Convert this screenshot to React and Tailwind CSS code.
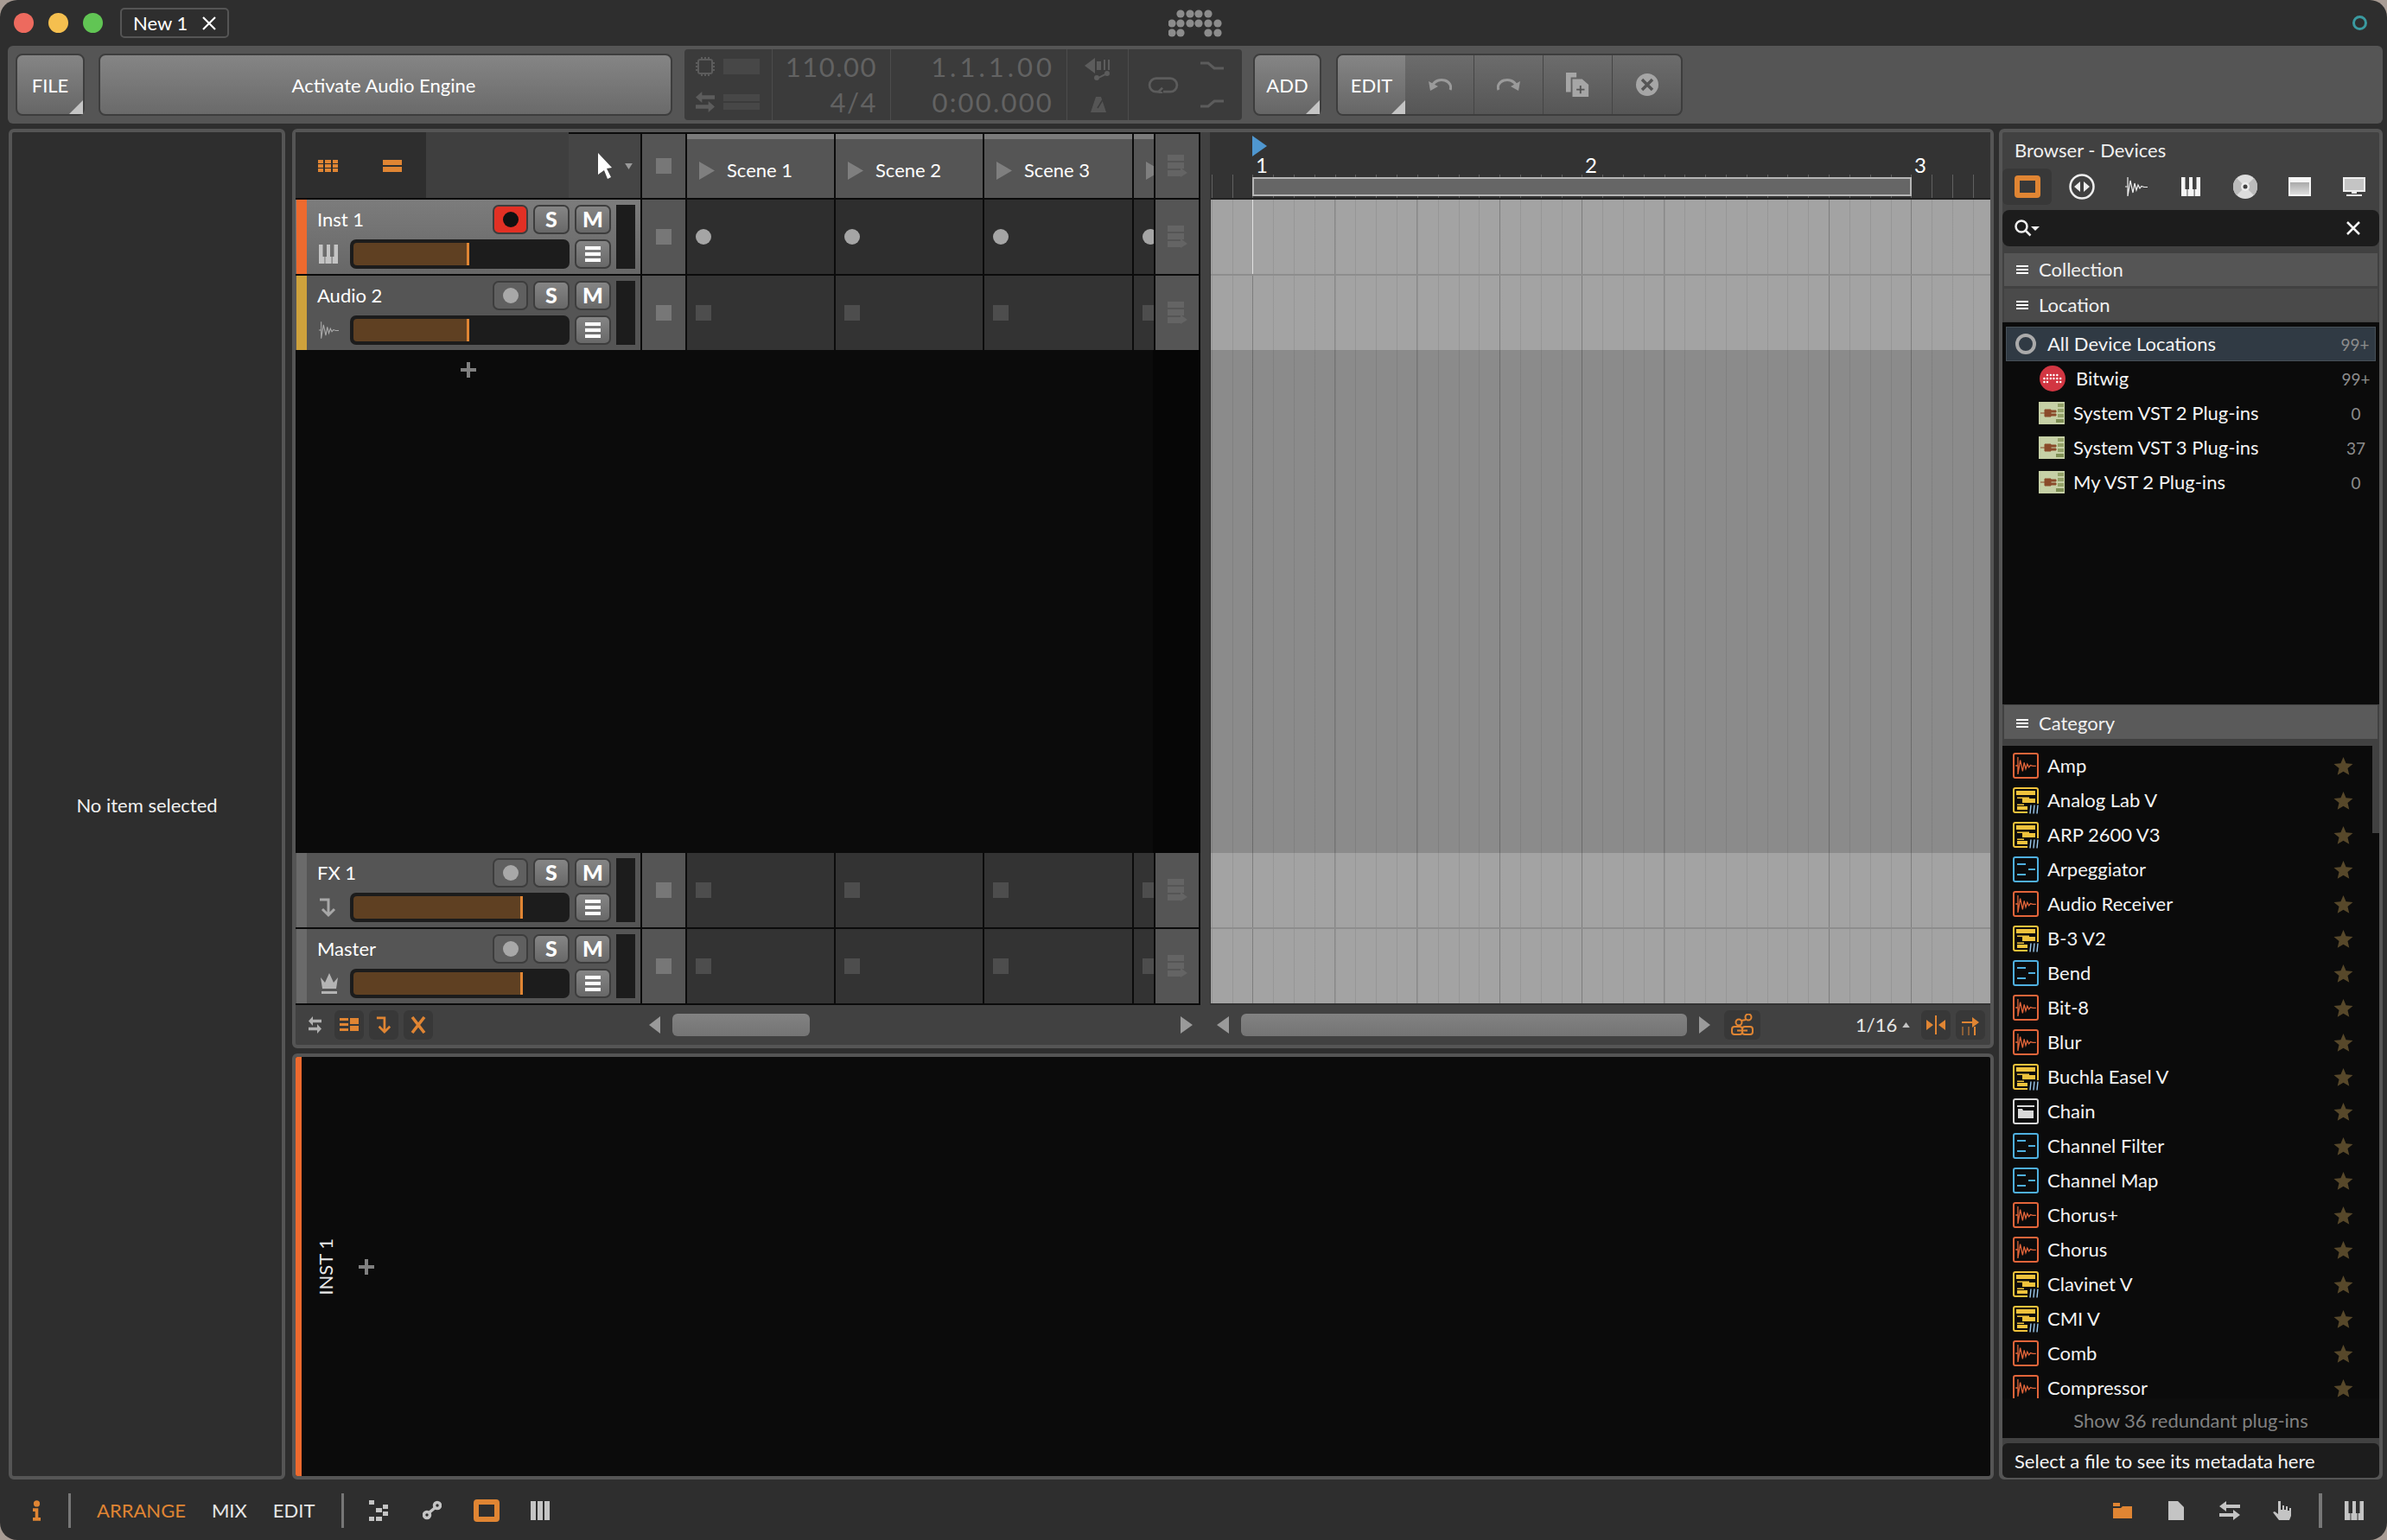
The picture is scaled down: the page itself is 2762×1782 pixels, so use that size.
import React from 'react';

const FONT = "font-['Lato','Liberation_Sans',sans-serif]";
const GRID = 'bg-[repeating-linear-gradient(90deg,transparent_0_48px,rgba(0,0,0,0.17)_48px_49px,transparent_49px_95.25px),repeating-linear-gradient(90deg,transparent_0_0.8px,rgba(0,0,0,0.08)_0.8px_1.8px,transparent_1.8px_23.81px)]';

const Piano = ({ className, color = '#c4c4c4' }) => (
  <svg viewBox="0 0 22 22" className={className} fill={color}>
    <path d="M0 0h4.5v14h2v8H0zM9 0h4v14h1.6v8H7.4v-8H9zM17.5 0H22v22h-6.4v-8h1.9z" />
  </svg>
);

const Wave = ({ className, color = '#c4c4c4', sw = 1.2 }) => (
  <svg viewBox="0 0 26 22" className={className} fill="none" stroke={color} strokeWidth={sw}>
    <path d="M0 11h3M3 0v22L6 4l3 14 2-11 2 8 2-6 2 4 2-2.500 3 1H26" />
  </svg>
);

const Stack = ({ className = 'w-[23px] h-[26px]' }) => (
  <svg viewBox="0 0 23 26" className={className} fill="#646464">
    <rect width="19" height="7" />
    <rect y="9" width="19" height="7" />
    <rect y="18" width="15" height="7" />
    <path d="M15 15l8 6-8 5z" />
  </svg>
);

const Bars = ({ className = 'w-[14px] h-[10px]', color = '#fff' }) => (
  <svg viewBox="0 0 14 10" className={className} fill={color}>
    <rect width="14" height="2" />
    <rect y="4" width="14" height="2" />
    <rect y="8" width="14" height="2" />
  </svg>
);

const SendArrow = ({ className, color = '#a8a8a8' }) => (
  <svg viewBox="0 0 20 24" className={className} fill="none" stroke={color} strokeWidth="3">
    <path d="M1 3h10v17M4 14l7 7 7-7" />
  </svg>
);

const Crown = ({ className }) => (
  <svg viewBox="0 0 24 28" className={className} fill="#b4b4b4">
    <path d="M2 7l5 6 5-11 5 11 5-6-2 13H4z" />
    <rect x="3" y="23" width="18" height="3" />
  </svg>
);

const SwapArrows = ({ className, color = '#b0b0b0' }) => (
  <svg viewBox="0 0 24 22" className={className} fill={color} preserveAspectRatio="none">
    <path d="M8 0v4h16v4H8v4L0 6zM16 10v4H0v4h16v4l8-6z" />
  </svg>
);

const Tri = ({ dir = 'r', className, color = '#9a9a9a' }) => (
  <svg viewBox="0 0 14 22" className={className} fill={color} preserveAspectRatio="none">
    <path d={dir === 'r' ? 'M0 0l14 11L0 22z' : 'M14 0L0 11l14 11z'} />
  </svg>
);

const Star = () => (
  <svg viewBox="0 0 24 24" className="w-[23px] h-[23px]" fill="#57482a">
    <path d="M12 1l3.2 7.6 8.3.7-6.3 5.4 1.9 8.1L12 18.500l-7.100 4.300 1.900-8.100L.500 9.300l8.300-.7z" />
  </svg>
);

const Btn = ({ children, red, dim, className = 'w-[42px]' }) => (
  <div className={`h-[34px] rounded-[7px] border-[2px] border-[#3d3d3d] flex items-center justify-center text-white text-[25px] font-black ${className} ${red ? 'bg-[#e23024]' : dim ? 'bg-[#606060]' : 'bg-[linear-gradient(#858585,#686868)]'}`}>
    {children}
  </div>
);

const Track = ({ name, strip, selected, level, icon, armed }) => (
  <div className={`w-[399px] h-[86px] flex pl-[1px] ${selected ? 'bg-[linear-gradient(#7c7c7c,#676767)]' : 'bg-[#555555]'}`}>
    <div className={`w-[12px] shrink-0 ${strip}`} />
    <div className="flex flex-col pt-[6px] gap-[6px]">
      <div className="flex items-center h-[34px]">
        <span className="w-[215px] pl-[12px] text-[22px] text-white leading-none">{name}</span>
        <Btn red={armed} dim={!armed} className="w-[41px]">
          <span className={`w-[18px] h-[18px] rounded-full ${armed ? 'bg-[#111111]' : 'bg-[#a8a8a8]'}`} />
        </Btn>
        <Btn className="w-[42px] ml-[6px]">S</Btn>
        <Btn className="w-[42px] ml-[6px]">M</Btn>
      </div>
      <div className="flex items-center h-[34px]">
        <div className="w-[50px] pl-[14px] flex items-center">{icon}</div>
        <div className="w-[254px] h-[34px] bg-[#1c1c1c] rounded-[7px] p-[4px] flex">
          <div className={`h-[26px] bg-[#5f4022] rounded-l-[4px] ${level}`} />
          <div className="w-[3px] h-[26px] bg-[#e08533]" />
        </div>
        <Btn className="w-[42px] ml-[6px]">
          <svg viewBox="0 0 18 18" className="w-[18px] h-[18px]" fill="#fff">
            <rect width="18" height="4" />
            <rect y="7" width="18" height="4" />
            <rect y="14" width="18" height="4" />
          </svg>
        </Btn>
      </div>
    </div>
    <div className="w-[22px] h-[74px] mt-[6px] ml-[6px] bg-[#1c1c1c]" />
  </div>
);

const ClipCell = ({ w, dot, bg }) => (
  <div className={`h-full ${w} pl-[10px] flex items-center overflow-hidden ${bg}`}>
    <span className={`w-[18px] h-[18px] shrink-0 ${dot ? 'rounded-full bg-[#a5a5a5]' : 'bg-[#4d4d4d]'}`} />
  </div>
);

const TrackRow = ({ dot, bg = 'bg-[#2e2e2e]', ...track }) => (
  <div className="flex h-[86px] gap-[2px] bg-[#0b0b0b]">
    <Track {...track} />
    <div className="w-[50px] bg-[#555555] flex items-center justify-center">
      <span className="w-[18px] h-[18px] bg-[#777777]" />
    </div>
    <ClipCell w="w-[170px]" dot={dot} bg={bg} />
    <ClipCell w="w-[170px]" dot={dot} bg={bg} />
    <ClipCell w="w-[171px]" dot={dot} bg={bg} />
    <ClipCell w="w-[23px]" dot={dot} bg={bg} />
    <div className="w-[50px] mr-[2px] bg-[#555555] flex items-center justify-center"><Stack /></div>
  </div>
);

const Scene = ({ label, w }) => (
  <div className={`${w} h-full bg-[#555555] flex flex-col overflow-hidden`}>
    <div className="h-[6px] bg-[#7b7b7b] shrink-0" />
    <div className="flex-1 flex items-center pl-[14px] gap-[14px] pt-[4px]">
      <Tri className="w-[18px] h-[21px] shrink-0" color="#7f7f7f" />
      {label && <span className="text-[22px] text-white leading-none whitespace-nowrap">{label}</span>}
    </div>
  </div>
);

const ToolBtn = ({ children, className = 'w-[34px]' }) => (
  <div className={`h-[34px] rounded-[6px] bg-[#383838] flex items-center justify-center ${className}`}>{children}</div>
);

const CornerBtn = ({ children, className }) => (
  <div className={`relative h-[72px] rounded-[8px] border-[2px] border-[#3d3d3d] bg-[linear-gradient(#858585,#666666)] flex items-center justify-center text-white text-[22px] ${className}`}>
    {children}
    <span className="absolute right-0 bottom-0 w-0 h-0 border-l-[16px] border-l-transparent border-b-[16px] border-b-[#c4c4c4]" />
  </div>
);

const Lane = ({ className, children }) => (
  <div className={`relative ${GRID} ${className}`}>{children}</div>
);

const DevIcon = ({ kind }) => {
  if (kind === 'a') return (
    <div className="w-[30px] h-[30px] shrink-0 rounded-[3px] border-[2px] border-[#e3653a] flex items-center justify-center">
      <Wave className="w-[24px] h-[20px]" color="#e3653a" sw={1.4} />
    </div>
  );
  if (kind === 'p') return (
    <div className="relative w-[30px] h-[30px] shrink-0 rounded-[3px] border-[2px] border-[#f0c33c]">
      <svg viewBox="0 0 26 26" className="w-full h-full" fill="#f0c33c">
        <rect x="2" y="2" width="22" height="5" />
        <rect x="3" y="9.500" width="14" height="1.500" />
        <rect x="9" y="11" width="15" height="5" />
        <rect x="3" y="17.500" width="8" height="1.500" />
        <rect x="3" y="20" width="15" height="4" />
      </svg>
      <div className="absolute right-[-4px] bottom-[-4px] w-[15px] h-[13px] bg-[#0b0b0b] rounded-[2px] flex items-center justify-center">
        <svg viewBox="0 0 13 11" className="w-[13px] h-[11px]" stroke="#9ccbf0" strokeWidth="1.400"><path d="M2 10.500L3 .5M6 10.500L7 .5M10 10.500L11 .5" /></svg>
      </div>
    </div>
  );
  if (kind === 'n') return (
    <div className="w-[30px] h-[30px] shrink-0 rounded-[3px] border-[2px] border-[#4fb0e0]">
      <svg viewBox="0 0 26 26" className="w-full h-full" fill="#4fb0e0">
        <rect x="3" y="6" width="10" height="2" />
        <rect x="16" y="12" width="8" height="2" />
        <rect x="3" y="18" width="10" height="2" />
      </svg>
    </div>
  );
  return (
    <div className="w-[30px] h-[30px] shrink-0 rounded-[3px] border-[2px] border-[#d8d8d8]">
      <svg viewBox="0 0 26 26" className="w-full h-full" fill="#d8d8d8">
        <rect x="3" y="6" width="20" height="2" />
        <path d="M4 10h5l1 2h12v9H4z" />
      </svg>
    </div>
  );
};

const categories = [
  ['Amp', 'a'], ['Analog Lab V', 'p'], ['ARP 2600 V3', 'p'], ['Arpeggiator', 'n'], ['Audio Receiver', 'a'],
  ['B-3 V2', 'p'], ['Bend', 'n'], ['Bit-8', 'a'], ['Blur', 'a'], ['Buchla Easel V', 'p'], ['Chain', 'w'],
  ['Channel Filter', 'n'], ['Channel Map', 'n'], ['Chorus+', 'a'], ['Chorus', 'a'], ['Clavinet V', 'p'],
  ['CMI V', 'p'], ['Comb', 'a'], ['Compressor', 'a'],
];

const locations = [
  ['System VST 2 Plug-ins', '0'],
  ['System VST 3 Plug-ins', '37'],
  ['My VST 2 Plug-ins', '0'],
];

const VstIcon = () => (
  <svg viewBox="0 0 30 26" className="w-[30px] h-[26px] shrink-0">
    <rect width="30" height="26" fill="#c6d0a6" />
    <path d="M2 13h5M7 9h7v8H7zM14 10h6v2h-6zM14 14h6v2h-6z" fill="#8a4a2a" stroke="#8a4a2a" />
    <rect x="22" y="2" width="7" height="4" fill="#93a168" />
    <rect x="22" y="8" width="7" height="4" fill="#93a168" />
    <rect x="22" y="14" width="7" height="4" fill="#93a168" />
    <rect x="20" y="20" width="9" height="4" fill="#7f8f55" />
  </svg>
);

const Logo = ({ rows, r, w, color }) => (
  <svg viewBox="0 0 62 32" className={w} fill={color}>
    {rows.map(([cy, xs]) => xs.map((x) => <circle key={`${cy}-${x}`} cx={x} cy={cy} r={r} />))}
  </svg>
);

const logoRows = [
  [5, [14, 25, 35, 46]],
  [16, [4, 14, 25, 35, 46, 57]],
  [27, [4, 14, 46, 57]],
];

const SectionHead = ({ label, bg, className = '' }) => (
  <div className={`mx-[2px] h-[38px] shrink-0 flex items-center pl-[14px] gap-[12px] text-[22px] text-[#f0f0f0] ${bg} ${className}`}>
    <Bars />
    <span className="leading-none">{label}</span>
  </div>
);

export default function App() {
  return (
    <div className={`w-[2762px] h-[1782px] bg-[#a89c94] overflow-hidden ${FONT}`}>
      <div className="w-full h-full rounded-[20px] bg-[#2e2e2e] flex flex-col overflow-hidden">
        {/* Title bar */}
        <div className="h-[53px] shrink-0 flex items-center pl-[16px] pr-[23px]">
          <span className="w-[23px] h-[23px] rounded-full bg-[#ed6a5e]" />
          <span className="w-[23px] h-[23px] rounded-full bg-[#f5bf4f] ml-[17px]" />
          <span className="w-[23px] h-[23px] rounded-full bg-[#61c554] ml-[17px]" />
          <div className="ml-[20px] w-[126px] h-[35px] rounded-[5px] border-[2px] border-[#555555] flex items-center justify-between pl-[13px] pr-[13px] text-[22px] text-white">
            <span>New 1</span>
            <svg viewBox="0 0 16 16" className="w-[16px] h-[16px]" stroke="#fff" strokeWidth="2.200"><path d="M1 1l14 14M15 1L1 15" /></svg>
          </div>
          <Logo rows={logoRows} r={4.6} w="w-[62px] h-[32px] ml-[1087px]" color="#8c8c8c" />
          <span className="ml-auto w-[17px] h-[17px] rounded-full border-[3px] border-[#3a9aa0]" />
        </div>

        {/* Toolbar */}
        <div className="ml-[9px] w-[2748px] h-[90px] shrink-0 bg-[#555555] rounded-[6px] flex items-center pl-[9px]">
          <CornerBtn className="w-[80px]">FILE</CornerBtn>
          <div className="ml-[16px] w-[664px] h-[72px] rounded-[8px] border-[2px] border-[#3d3d3d] bg-[linear-gradient(#858585,#6a6a6a)] flex items-center justify-center text-white text-[22px] pr-[4px]">
            Activate Audio Engine
          </div>
          <div className="ml-[14px] w-[645px] h-[82px] bg-[#3b3b3b] rounded-[4px] flex text-[#626262] text-[31px] tracking-[1.5px] leading-none">
            <div className="w-[102px] border-r-[1px] border-[#4c4c4c] flex flex-col justify-around pl-[13px]">
              <div className="flex items-center gap-[10px]">
                <svg viewBox="0 0 22 22" className="w-[22px] h-[22px]" fill="none" stroke="#5c5c5c" strokeWidth="2"><rect x="3" y="3" width="16" height="16" rx="2" /><path d="M7 0v2M11 0v2M15 0v2M7 20v2M11 20v2M15 20v2M0 7h2M0 11h2M0 15h2M20 7h2M20 11h2M20 15h2" /></svg>
                <span className="w-[42px] h-[18px] bg-[#474747]" />
              </div>
              <div className="flex items-center gap-[10px]">
                <SwapArrows className="w-[22px] h-[24px]" color="#5c5c5c" />
                <span className="w-[42px] flex flex-col gap-[2px]"><span className="h-[8px] bg-[#474747]" /><span className="h-[8px] bg-[#474747]" /></span>
              </div>
            </div>
            <div className="w-[137px] border-r-[1px] border-[#4c4c4c] grid grid-rows-2 text-right pr-[15px] items-center">
              <span>110.00</span>
              <span>4/4</span>
            </div>
            <div className="w-[204px] border-r-[1px] border-[#4c4c4c] grid grid-rows-2 text-right pr-[15px] items-center">
              <span className="tracking-[4px] -mr-[2px]">1.1.1.00</span>
              <span className="tracking-[2.2px]">0:00.000</span>
            </div>
            <div className="w-[71px] border-r-[1px] border-[#4c4c4c] flex flex-col items-center justify-around pl-[2px]">
              <svg viewBox="0 0 32 26" className="w-[32px] h-[26px]" fill="#5c5c5c"><path d="M0 9L12 0v18zM14 4h5v10h-5zM22 2h2v12h-2zM27 2h2v12h-2z" /><path d="M14 24l12-6" stroke="#5c5c5c" strokeWidth="2" /><circle cx="14" cy="23" r="3" /><circle cx="26" cy="18" r="3" /></svg>
              <svg viewBox="0 0 20 18" className="w-[20px] h-[18px]" fill="#555555"><path d="M7 0h6l6 18H1z" /><path d="M9 13l8-13" stroke="#3b3b3b" strokeWidth="1.500" /></svg>
            </div>
            <div className="flex-1 flex items-center pl-[22px]">
              <svg viewBox="0 0 36 22" className="w-[36px] h-[20px]" fill="none" stroke="#5c5c5c" strokeWidth="3"><path d="M12 20H9a8 8 0 010-17h18a8 8 0 010 17h-9" /><path d="M17 15l-5 5 5 2" /></svg>
              <div className="ml-[25px] flex flex-col gap-[34px]">
                <svg viewBox="0 0 27 10" className="w-[27px] h-[10px]" fill="none" stroke="#5c5c5c" strokeWidth="3"><path d="M0 2h9l7 6h11" /></svg>
                <svg viewBox="0 0 27 10" className="w-[27px] h-[10px]" fill="none" stroke="#5c5c5c" strokeWidth="3"><path d="M0 8h9l7-6h11" /></svg>
              </div>
            </div>
          </div>
          <CornerBtn className="ml-[13px] w-[79px]">ADD</CornerBtn>
          <div className="ml-[17px] flex h-[72px] rounded-[8px] border-[2px] border-[#3d3d3d] bg-[linear-gradient(#6c6c6c,#565656)] overflow-hidden">
            <div className="relative w-[78px] bg-[linear-gradient(#858585,#666666)] flex items-center justify-center text-white text-[22px]">
              EDIT
              <span className="absolute right-0 bottom-0 w-0 h-0 border-l-[16px] border-l-transparent border-b-[16px] border-b-[#c4c4c4]" />
            </div>
            <div className="w-[80px] border-r-[1px] border-[#454545] flex items-center justify-center">
              <svg viewBox="0 0 28 18" className="w-[28px] h-[18px]" fill="none" stroke="#9a9a9a" strokeWidth="3"><path d="M6 9a10 8 0 0120 6" /><path d="M1 5l2 11 9-5z" fill="#9a9a9a" stroke="none" /></svg>
            </div>
            <div className="w-[80px] border-r-[1px] border-[#454545] flex items-center justify-center">
              <svg viewBox="0 0 28 18" className="w-[28px] h-[18px]" fill="none" stroke="#9a9a9a" strokeWidth="3"><path d="M22 9a10 8 0 00-20 6" /><path d="M27 5l-2 11-9-5z" fill="#9a9a9a" stroke="none" /></svg>
            </div>
            <div className="w-[80px] border-r-[1px] border-[#454545] flex items-center justify-center">
              <svg viewBox="0 0 30 30" className="w-[28px] h-[28px]" fill="#a6a6a6"><path d="M0 0h13v6H6v18H0z" /><path d="M8 8h12l8 7v15H8z" /><path d="M18 16v10M13 21h10" stroke="#555555" strokeWidth="2" /></svg>
            </div>
            <div className="w-[79px] flex items-center justify-center">
              <svg viewBox="0 0 26 26" className="w-[26px] h-[26px]"><circle cx="13" cy="13" r="13" fill="#a6a6a6" /><path d="M7 7l12 12M19 7L7 19" stroke="#555555" strokeWidth="3.500" /></svg>
            </div>
          </div>
        </div>

        {/* Panels */}
        <div className="mt-[6px] h-[1563px] shrink-0 pl-[10px] flex">
          <div className="w-[320px] rounded-[6px] border-[4px] border-[#555555] bg-[#2e2e2e] flex items-center justify-center text-[#f0f0f0] text-[22px] pt-[2px]">
            No item selected
          </div>

          <div className="ml-[8px] w-[1969px] flex flex-col gap-[6px]">
            {/* Arranger panel */}
            <div className="h-[1064px] rounded-[6px] border-[4px] border-[#555555] bg-[#414141] flex flex-col">
              <div className="h-[1010px] flex">
                {/* Track list */}
                <div className="w-[1047px] flex flex-col bg-[#0b0b0b]">
                  <div className="h-[78px] pb-[2px] shrink-0 flex">
                    <div className="w-[151px] bg-[#2e2e2e] flex items-center pl-[26px] gap-[52px] pt-[2px]">
                      <svg viewBox="0 0 23 14" className="w-[23px] h-[14px]" fill="#e08533">
                        <rect width="6" height="4" /><rect x="8" width="7" height="4" /><rect x="17" width="6" height="4" />
                        <rect y="5" width="6" height="4" /><rect x="8" y="5" width="7" height="4" /><rect x="17" y="5" width="6" height="4" />
                        <rect y="10" width="6" height="4" /><rect x="8" y="10" width="7" height="4" /><rect x="17" y="10" width="6" height="4" />
                      </svg>
                      <svg viewBox="0 0 22 14" className="w-[22px] h-[14px]" fill="#e08533"><rect width="22" height="6" /><rect y="8" width="22" height="6" /></svg>
                    </div>
                    <div className="w-[165px] bg-[#3f3f3f]" />
                    <div className="w-[83px] mt-[2px] bg-[#454545] flex items-center pl-[33px]">
                      <svg viewBox="0 0 18 30" className="w-[18px] h-[30px]" fill="#fff"><path d="M1 0l16 17-6 1 5 10-4 2-4-10-7 5z" /></svg>
                      <svg viewBox="0 0 10 8" className="ml-[14px] w-[9px] h-[7px]" fill="#9a9a9a"><path d="M0 0h10L5 8z" /></svg>
                    </div>
                    <div className="flex-1 flex gap-[2px] pl-[2px] pr-[2px] pt-[2px]">
                      <div className="w-[50px] bg-[#555555] flex items-center justify-center"><span className="w-[18px] h-[18px] bg-[#777777]" /></div>
                      <Scene label="Scene 1" w="w-[170px]" />
                      <Scene label="Scene 2" w="w-[170px]" />
                      <Scene label="Scene 3" w="w-[171px]" />
                      <Scene w="w-[23px]" />
                      <div className="w-[50px] bg-[#555555] flex items-center justify-center"><Stack /></div>
                    </div>
                  </div>

                  <TrackRow name="Inst 1" strip="bg-[#ee6a2e]" selected armed level="w-[131px]" dot icon={<Piano className="w-[22px] h-[22px]" />} />
                  <div className="h-[2px] shrink-0" />
                  <TrackRow name="Audio 2" strip="bg-[#cfa23c]" level="w-[131px]" bg="bg-[#333333]" icon={<Wave className="w-[23px] h-[24px]" color="#aaaaaa" />} />

                  <div className="h-[582px] shrink-0 flex justify-between pl-[191px]">
                    <svg viewBox="0 0 18 18" className="mt-[14px] w-[18px] h-[18px]" fill="#808080"><rect x="7" width="4" height="18" /><rect y="7" width="18" height="4" /></svg>
                    <div className="w-[55px] bg-[#060606]" />
                  </div>

                  <TrackRow name="FX 1" strip="bg-[#6a6a6a]" level="w-[193px]" bg="bg-[#333333]" icon={<SendArrow className="w-[20px] h-[24px]" />} />
                  <div className="h-[2px] shrink-0" />
                  <TrackRow name="Master" strip="bg-[#6a6a6a]" level="w-[193px]" bg="bg-[#333333]" icon={<Crown className="w-[24px] h-[28px]" />} />
                </div>

                {/* Arranger timeline */}
                <div className="ml-[11px] w-[903px] flex flex-col bg-[#333333] border-l-[1px] border-[#333333]">
                  <div className="relative h-[78px] shrink-0 bg-[#333333] text-white text-[24px] leading-none">
                    <svg viewBox="0 0 17 24" className="absolute left-[48px] top-[4px] w-[17px] h-[24px]" fill="#4f97d0"><path d="M0 0l17 12L0 24z" /></svg>
                    <span className="absolute left-[52px] top-[26px]">1</span>
                    <span className="absolute left-[433px] top-[26px]">2</span>
                    <span className="absolute left-[814px] top-[26px]">3</span>
                    <div className={`absolute left-0 right-0 top-[49px] h-[27px] bg-[repeating-linear-gradient(90deg,transparent_0_0.8px,#606060_0.8px_1.8px,transparent_1.8px_23.81px)]`} />
                    <div className="absolute left-[48px] w-[763px] top-[52px] h-[22px] bg-[#666666] border-[2px] border-[#b5b5b5]" />
                    <div className="absolute left-0 right-0 bottom-0 h-[2px] bg-[#222222]" />
                  </div>
                  <Lane className="h-[86px] bg-[#a3a3a3] shrink-0">
                    <div className="absolute left-[48px] top-0 bottom-0 w-[1px] bg-[#e0e0e0]" />
                  </Lane>
                  <div className="h-[2px] bg-[#8d8d8d] shrink-0" />
                  <Lane className="h-[86px] bg-[#a3a3a3] shrink-0" />
                  <Lane className="h-[582px] bg-[#8b8b8b] shrink-0" />
                  <Lane className="h-[86px] bg-[#a3a3a3] shrink-0" />
                  <div className="h-[2px] bg-[#8d8d8d] shrink-0" />
                  <Lane className="h-[86px] bg-[#a3a3a3] shrink-0" />
                </div>
              </div>

              {/* Arranger footer */}
              <div className="flex-1 flex items-center pl-[15px]">
                <SwapArrows className="w-[15px] h-[20px]" />
                <ToolBtn className="w-[34px] ml-[15px]">
                  <svg viewBox="0 0 22 16" className="w-[22px] h-[16px]" fill="#e08533"><rect width="10" height="3" /><rect y="6" width="10" height="3" /><rect y="12" width="10" height="3" /><rect x="12" width="10" height="7" /><rect x="12" y="9" width="10" height="6" /></svg>
                </ToolBtn>
                <ToolBtn className="w-[34px] ml-[6px]"><SendArrow className="w-[18px] h-[22px]" color="#e08533" /></ToolBtn>
                <ToolBtn className="w-[34px] ml-[6px]">
                  <svg viewBox="0 0 18 20" className="w-[18px] h-[20px]" stroke="#e08533" strokeWidth="3.500"><path d="M2 1l14 18M16 1L2 19" /></svg>
                </ToolBtn>
                <Tri dir="l" className="ml-[250px] w-[13px] h-[20px]" />
                <div className="ml-[14px] w-[159px] h-[26px] rounded-[6px] bg-[linear-gradient(#828282,#747474)]" />
                <Tri className="ml-[429px] w-[14px] h-[20px]" />
                <Tri dir="l" className="ml-[28px] w-[14px] h-[20px]" />
                <div className="ml-[14px] w-[516px] h-[26px] rounded-[6px] bg-[linear-gradient(#828282,#747474)]" />
                <Tri className="ml-[14px] w-[13px] h-[20px]" />
                <ToolBtn className="w-[42px] ml-[16px]">
                  <svg viewBox="0 0 26 26" className="w-[26px] h-[26px]" fill="none" stroke="#e08533" strokeWidth="2"><circle cx="20" cy="4" r="3.500" /><circle cx="9" cy="10" r="3.500" /><path d="M17 7l-5 1" /><rect x="1" y="15" width="12" height="9" rx="3" /><rect x="13" y="15" width="12" height="9" rx="3" /><path d="M7 19.500h12" /></svg>
                </ToolBtn>
                <span className="ml-[110px] w-[47px] text-[22px] text-[#e6e6e6] leading-none whitespace-nowrap">1/16</span>
                <svg viewBox="0 0 10 7" className="ml-[7px] w-[9px] h-[6px]" fill="#c4c4c4"><path d="M5 0l5 7H0z" /></svg>
                <ToolBtn className="w-[34px] ml-[13px]">
                  <svg viewBox="0 0 22 22" className="w-[22px] h-[22px]" fill="#e08533"><path d="M0 5l8 6-8 6zM22 5l-8 6 8 6z" /><rect x="10" width="2" height="22" /></svg>
                </ToolBtn>
                <ToolBtn className="w-[34px] ml-[6px]">
                  <svg viewBox="0 0 24 24" className="w-[24px] h-[24px]" fill="#e08533"><path d="M2 8h12V3l8 6-8 6v-5H2z" /><rect x="2" y="14" width="2" height="10" opacity=".5" /><rect x="9" y="14" width="2" height="10" opacity=".5" /><rect x="16" y="14" width="2" height="10" /></svg>
                </ToolBtn>
              </div>
            </div>

            {/* Device panel */}
            <div className="flex-1 rounded-[6px] border-[4px] border-[#555555] bg-[#0b0b0b] flex overflow-hidden">
              <div className="w-[7px] bg-[#ee6a2e]" />
              <div className="w-[55px] flex items-center justify-center">
                <span className="text-[22px] text-[#e8e8e8] leading-none [writing-mode:vertical-rl] rotate-180">INST 1</span>
              </div>
              <div className="flex items-center pl-[11px]">
                <svg viewBox="0 0 18 18" className="w-[18px] h-[18px]" fill="#808080"><rect x="7" width="4" height="18" /><rect y="7" width="18" height="4" /></svg>
              </div>
            </div>
          </div>

          {/* Browser */}
          <div className="ml-[6px] w-[444px] rounded-[6px] border-[4px] border-[#555555] bg-[#414141] flex flex-col">
            <div className="h-[42px] shrink-0 flex items-center pl-[14px] text-[22px] text-[#f0f0f0] leading-none">Browser - Devices</div>
            <div className="h-[42px] shrink-0 flex items-center">
              <div className="w-[57px] h-[42px] rounded-[6px] bg-[#383838] flex items-center justify-center">
                <span className="w-[30px] h-[26px] rounded-[4px] border-[6px] border-[#e08533]" />
              </div>
              <div className="w-[70px] flex justify-center">
                <svg viewBox="0 0 30 30" className="w-[30px] h-[30px]"><circle cx="15" cy="15" r="13.500" fill="none" stroke="#eeeeee" strokeWidth="2.500" /><path d="M13 9v12l-7-6zM17 9v12l7-6z" fill="#eeeeee" /></svg>
              </div>
              <div className="w-[56px] flex justify-center"><Wave className="w-[26px] h-[22px]" color="#eeeeee" /></div>
              <div className="w-[70px] flex justify-center"><Piano className="w-[22px] h-[22px]" color="#f5f5f5" /></div>
              <div className="w-[56px] flex justify-center">
                <svg viewBox="0 0 28 28" className="w-[28px] h-[28px]"><circle cx="14" cy="14" r="14" fill="#dddddd" /><path d="M14 14L4 4a14 14 0 000 20zM14 14l10 10a14 14 0 000-20z" fill="#bbbbbb" /><circle cx="14" cy="14" r="5" fill="#eeeeee" /><circle cx="14" cy="14" r="2.500" fill="#414141" /></svg>
              </div>
              <div className="w-[70px] flex justify-center">
                <div className="w-[26px] h-[22px] border-[2px] border-t-[6px] border-[#f5f5f5] bg-[linear-gradient(#aaaaaa,#dddddd)]" />
              </div>
              <div className="w-[56px] flex justify-center">
                <svg viewBox="0 0 26 22" className="w-[26px] h-[22px]"><rect x="1" y="1" width="24" height="15" fill="#c4c4c4" stroke="#eeeeee" strokeWidth="2" /><rect x="10" y="17" width="6" height="2" fill="#eeeeee" /><rect x="4" y="20" width="18" height="2" fill="#eeeeee" /></svg>
              </div>
            </div>
            <div className="mt-[6px] h-[42px] shrink-0 rounded-[8px] bg-[#1c1c1c] flex items-center justify-between pl-[14px] pr-[22px]">
              <svg viewBox="0 0 30 20" className="w-[30px] h-[20px]" fill="none" stroke="#f0f0f0" strokeWidth="2.500"><circle cx="8" cy="8" r="6.500" /><path d="M12.500 12.500l6 6" /><path d="M19 8h10l-5 5z" fill="#f0f0f0" stroke="none" /></svg>
              <svg viewBox="0 0 16 16" className="w-[16px] h-[16px]" stroke="#f5f5f5" strokeWidth="2.500"><path d="M1 1l14 14M15 1L1 15" /></svg>
            </div>
            <div className="mt-[8px] h-[79px] shrink-0 flex flex-col justify-between">
              <SectionHead label="Collection" bg="bg-[#555555]" />
              <SectionHead label="Location" bg="bg-[#4a4a4a]" />
            </div>

            <div className="mt-[1px] h-[442px] shrink-0 bg-[#0b0b0b] pt-[5px] text-[22px] text-[#f4f4f4]">
              <div className="mx-[4px] h-[40px] bg-[#303a44] border-[1px] border-[#475058] flex items-center pl-[10px]">
                <span className="w-[24px] h-[24px] rounded-full border-[4px] border-[#aaaaaa]" />
                <span className="ml-[13px] leading-none">All Device Locations</span>
                <span className="ml-auto w-[46px] text-center text-[19px] text-[#8c8c8c] leading-none">99+</span>
              </div>
              <div className="h-[40px] flex items-center pl-[43px] pr-[4px]">
                <span className="w-[30px] h-[30px] rounded-full bg-[#d23642] flex items-center justify-center">
                  <Logo rows={logoRows} r={3.500} w="w-[22px] h-[12px]" color="#ffffff" />
                </span>
                <span className="ml-[12px] leading-none">Bitwig</span>
                <span className="ml-auto w-[46px] text-center text-[19px] text-[#8c8c8c] leading-none">99+</span>
              </div>
              {locations.map(([label, n]) => (
                <div key={label} className="h-[40px] flex items-center pl-[42px] pr-[4px]">
                  <VstIcon />
                  <span className="ml-[10px] leading-none">{label}</span>
                  <span className="ml-auto w-[46px] text-center text-[19px] text-[#8c8c8c] leading-none">{n}</span>
                </div>
              ))}
            </div>

            <SectionHead label="Category" bg="bg-[#5a5a5a]" className="h-[39px] mt-[1px] pt-[2px]" />

            <div className="mt-[8px] h-[755px] shrink-0 flex bg-[#0b0b0b] overflow-hidden">
              <div className="w-[428px] shrink-0 pt-[3px] text-[22px] text-[#f4f4f4]">
                {categories.map(([label, kind]) => (
                  <div key={label} className="h-[40px] flex items-center pl-[12px]">
                    <DevIcon kind={kind} />
                    <span className="ml-[10px] leading-none">{label}</span>
                    <span className="ml-auto mr-[22px]"><Star /></span>
                  </div>
                ))}
              </div>
              <div className="w-[8px] h-[101px] bg-[#414141]" />
            </div>
            <div className="h-[46px] shrink-0 bg-[#0d0d0d] flex items-center justify-center pt-[5px] text-[22px] text-[#808080] leading-none">
              Show 36 redundant plug-ins
            </div>
            <div className="mt-[6px] h-[40px] shrink-0 rounded-[6px] bg-[#1c1c1c] flex items-center pl-[14px] pt-[2px] text-[22px] text-[#f4f4f4] leading-none">
              Select a file to see its metadata here
            </div>
          </div>
        </div>

        {/* Status bar */}
        <div className="flex-1 flex items-center pl-[38px] pr-[27px] pt-[2px] text-[22px] leading-none text-[#e6e6e6]">
          <svg viewBox="0 0 10 26" className="w-[9px] h-[24px]" fill="#e08533"><circle cx="5" cy="4" r="4" /><path d="M0 10h7v12h3v4H0v-4h3v-8H0z" /></svg>
          <span className="ml-[32px] w-[3px] h-[40px] bg-[#777777]" />
          <span className="ml-[30px] text-[#e08533]">ARRANGE</span>
          <span className="ml-[30px]">MIX</span>
          <span className="ml-[30px]">EDIT</span>
          <span className="ml-[31px] w-[3px] h-[40px] bg-[#777777]" />
          <svg viewBox="0 0 22 24" className="ml-[29px] w-[22px] h-[24px]" fill="#c4c4c4"><rect width="6" height="5" /><rect x="16" y="5" width="6" height="5" /><rect x="8" y="9" width="7" height="5" /><rect x="16" y="13" width="6" height="5" /><rect y="19" width="6" height="5" /><rect x="8" y="19" width="7" height="5" /></svg>
          <svg viewBox="0 0 22 24" className="ml-[40px] w-[22px] h-[24px]" fill="none" stroke="#c4c4c4" strokeWidth="3.500"><circle cx="17" cy="6" r="3.500" /><circle cx="5" cy="17" r="3.500" /><path d="M14 9l-6 5" /></svg>
          <span className="ml-[37px] w-[30px] h-[26px] rounded-[4px] border-[6px] border-[#e08533]" />
          <div className="ml-[36px] flex gap-[2px]">
            <span className="w-[6px] h-[22px] bg-[#c4c4c4]" />
            <span className="w-[6px] h-[22px] bg-[#c4c4c4]" />
            <span className="w-[6px] h-[22px] bg-[#c4c4c4]" />
          </div>

          <svg viewBox="0 0 22 18" className="ml-auto w-[22px] h-[18px]" fill="#e08533"><rect width="8" height="4" /><path d="M0 6h9l2-2h11v14H0z" /></svg>
          <svg viewBox="0 0 18 22" className="ml-[42px] w-[18px] h-[22px]" fill="#c4c4c4"><path d="M0 0h11l7 7v15H0z" /></svg>
          <SwapArrows className="ml-[41px] w-[24px] h-[22px]" color="#c4c4c4" />
          <svg viewBox="0 0 22 22" className="ml-[38px] w-[22px] h-[22px]" fill="#c4c4c4"><path d="M6 0h3v10h2V5h2v5h2V6h2v5h2V8h2v9l-2 5H7l-7-9 2-1 4 3z" /></svg>
          <span className="ml-[31px] w-[4px] h-[40px] bg-[#777777]" />
          <Piano className="ml-[26px] w-[22px] h-[22px]" />
        </div>
      </div>
    </div>
  );
}
